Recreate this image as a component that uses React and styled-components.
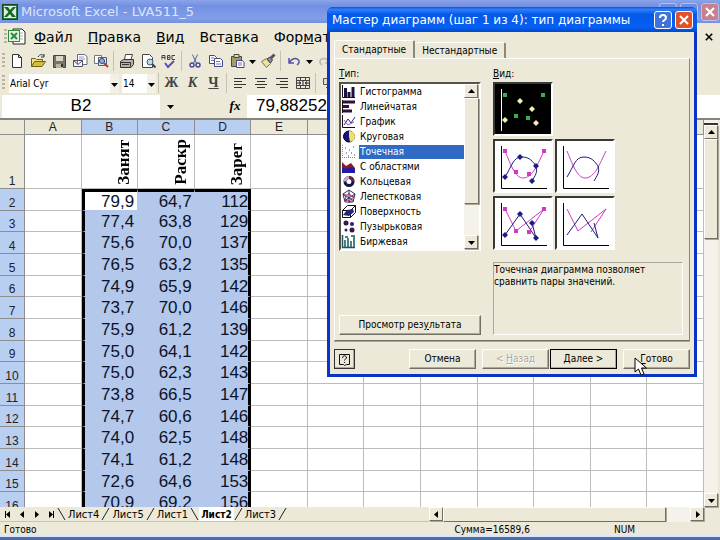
import React, { useState } from 'react';
import styled, { createGlobalStyle, css } from 'styled-components';

const GlobalStyle = createGlobalStyle`
  * { box-sizing: border-box; }
  body {
    margin: 0;
    overflow: hidden;
    background: #ece9d8;
    color: #000;
    font-family: "DejaVu Sans Condensed", "DejaVu Sans", sans-serif;
    font-size: 10px;
  }
  button, input, select { font-family: inherit; color: inherit; }
  button { padding: 0; cursor: default; }
`;

//DATA

const MENU = [['', 'Ф', 'айл'], ['', 'П', 'равка'], ['', 'В', 'ид'], ['Вст', 'а', 'вка'], ['Фор', 'м', 'ат']];

const COLUMNS = ['A', 'B', 'C', 'D', 'E', 'F', 'G', 'H', 'I', 'J', 'K', 'L'];

const ROWS = [
  ['79,9', '64,7', '112'],
  ['77,4', '63,8', '129'],
  ['75,6', '70,0', '137'],
  ['76,5', '63,2', '135'],
  ['74,9', '65,9', '142'],
  ['73,7', '70,0', '146'],
  ['75,9', '61,2', '139'],
  ['75,0', '64,1', '142'],
  ['75,0', '62,3', '143'],
  ['73,8', '66,5', '147'],
  ['74,7', '60,6', '146'],
  ['74,0', '62,5', '148'],
  ['74,1', '61,2', '148'],
  ['72,6', '64,6', '153'],
  ['70,9', '69,2', '156'],
];

const HEADINGS = { B: 'Занят', C: 'Раскр', D: 'Зарег' };

const SHEETS = ['Лист4', 'Лист5', 'Лист1', 'Лист2', 'Лист3'];

const raised = css`
  border: 1px solid;
  border-color: #fff #716f64 #716f64 #fff;
  box-shadow: 1px 1px 0 #aca899;
`;

//APPLICATION WINDOW

const Window = styled.div`
  display: flex;
  flex-direction: column;
  height: 100vh;
  overflow: hidden;
  border-bottom: 3px solid #4a6ea9;
`;

const TitleBar = styled.header`
  display: flex;
  flex: none;
  align-items: center;
  gap: 3px;
  height: 23px;
  padding: 0 1px 0 2px;
  background: linear-gradient(#8aa4ea, #7490e2 25%, #819ee8 80%, #7890dc);
`;

const WindowTitle = styled.h1`
  flex: 1;
  margin: 0;
  color: #dce6fb;
  font-family: "DejaVu Sans", sans-serif;
  font-size: 13px;
  font-weight: normal;
  white-space: nowrap;
`;

const CaptionButton = styled.button`
  display: flex;
  align-items: center;
  justify-content: center;
  width: 18px;
  height: 18px;
  border: 1px solid ${({ $faded }) => ($faded ? '#b4c2ef' : '#fff')};
  border-radius: 3px;
  background: ${({ $tone }) => $tone};
`;

const MenuBar = styled.nav`
  display: flex;
  flex: none;
  align-items: center;
  height: 27px;
  padding: 0 6px 0 2px;
`;

const MenuItem = styled.button`
  margin: 0 4px 0 5px;
  padding: 0 3px;
  border: 0;
  background: none;
  font-family: "DejaVu Sans", sans-serif;
  font-size: 14px;
  line-height: 22px;
`;

const Spacer = styled.div`
  flex: 1;
`;

const BookClose = styled.button`
  width: 10px;
  border: 0;
  background: none;
`;

const Grip = styled.span`
  width: 3px;
  height: 16px;
  margin: 0 1px 0 2px;
  background: repeating-linear-gradient(#b9b5a0 0 2px, transparent 2px 4px);
`;

const ToolBar = styled.div`
  display: flex;
  flex: none;
  align-items: center;
  height: 22px;
`;

const Tool = styled.button`
  display: flex;
  flex: none;
  align-items: center;
  justify-content: center;
  width: ${({ $narrow }) => ($narrow ? 10 : 21)}px;
  height: 20px;
  border: 0;
  background: none;
`;

const FormatTool = styled(Tool)`
  color: #444;
  font-family: "Liberation Serif", serif;
  font-size: 14px;
  font-weight: bold;
`;

const Divider = styled.span`
  width: 1px;
  height: 20px;
  margin: 0 2px;
  background: #c5c2b2;
`;

const Combo = styled.label`
  display: flex;
  position: relative;
  margin-left: 3px;
  svg { position: absolute; right: 1px; top: 7px; pointer-events: none; }
`;

const ComboBox = styled.select`
  width: ${({ $width }) => $width}px;
  height: 19px;
  padding: 0 0 0 1px;
  border: 0;
  appearance: none;
  background: #fff linear-gradient(#f3f1e6, #f3f1e6) right / 9px 100% no-repeat;
  font-size: 10px;
`;

const FormulaBar = styled.div`
  display: flex;
  flex: none;
  align-items: center;
  height: 24px;
  padding: 0 0 0 2px;
`;

const NameBox = styled.input`
  width: 158px;
  height: 23px;
  padding: 0;
  border: 0;
  background: #fff;
  font-family: "Liberation Sans", sans-serif;
  font-size: 17px;
  text-align: center;
`;

const FormulaField = styled.input`
  flex: 1;
  min-width: 0;
  height: 23px;
  padding: 0 9px;
  border: 0;
  background: #fff;
  font-family: "Liberation Sans", sans-serif;
  font-size: 17px;
`;

const FxButton = styled.button`
  width: 24px;
  margin-left: 42px;
  border: 0;
  background: none;
  font-family: "Liberation Serif", serif;
  font-size: 13px;
  font-style: italic;
  font-weight: bold;
`;

//SHEET

const Workbook = styled.main`
  display: flex;
  flex: 1;
  min-height: 0;
  padding-right: 2px;
  border-top: 2px solid #85837a;
`;

const SheetArea = styled.div`
  flex: 1;
  min-width: 0;
  overflow: hidden;
  background: #fff;
`;

const Sheet = styled.table`
  width: 100%;
  border-collapse: separate;
  border-spacing: 0;
  table-layout: fixed;
  font-family: "Liberation Sans", sans-serif;
`;

const ColumnHead = styled.th`
  width: ${({ $corner }) => ($corner ? '25px' : 'auto')};
  height: 15px;
  padding: 0;
  border-right: 1px solid #8e8e8e;
  border-bottom: 1px solid #8e8e8e;
  background: ${({ $selected }) => ($selected ? '#b9cff2' : '#ece9d8')};
  color: #222;
  font-size: 12px;
  font-weight: normal;
  line-height: 13px;
`;

const RowHead = styled.th`
  height: ${({ $height }) => $height}px;
  padding: 0;
  border-right: 1px solid #8e8e8e;
  border-bottom: 1px solid #8e8e8e;
  background: ${({ $selected }) => ($selected ? '#b9cff2' : '#ece9d8')};
  color: #222;
  font-size: 12px;
  font-weight: normal;
  line-height: 14px;
  vertical-align: bottom;
`;

const Cell = styled.td`
  padding: 0;
  border-right: 1px solid #bcbcbc;
  border-bottom: 1px solid #bcbcbc;
`;

const HeadingCell = styled(Cell)`
  padding: 0 5px 1px 0;
  text-align: right;
  vertical-align: bottom;
  span {
    display: inline-block;
    writing-mode: vertical-rl;
    transform: rotate(180deg);
    font-family: "Liberation Serif", serif;
    font-size: 17px;
    font-weight: bold;
    line-height: 17px;
  }
`;

const DataCell = styled(Cell)`
  padding-right: ${({ $edge }) => ($edge ? 0 : 2)}px;
  border-color: #b4c8ec;
  ${({ $edge }) => $edge === 'left' && 'border-left: 3px solid #000; padding-right: 3px;'}
  ${({ $edge }) => $edge === 'right' && 'border-right: 3px solid #000;'}
  ${({ $top }) => $top && 'border-top: 3px solid #000;'}
  background: ${({ $active }) => ($active ? '#fff' : '#b4c8ec')};
  color: #0c1228;
  font-size: 17px;
  line-height: 17px;
  text-align: right;
`;

const VerticalBar = styled.div`
  display: flex;
  flex: none;
  flex-direction: column;
  width: ${({ $width }) => $width}px;
  background: #f4f2ea;
`;

const ScrollButton = styled.button`
  display: flex;
  flex: none;
  align-items: center;
  justify-content: center;
  width: 14px;
  height: 14px;
  background: #ece9d8;
  ${raised}
`;

const Thumb = styled.div`
  flex: ${({ $part }) => $part};
  background: #ece9d8;
  ${raised}
`;

const Track = styled.div`
  flex: ${({ $part }) => $part};
`;

const SplitBox = styled.div`
  height: 5px;
  border-bottom: 2px solid #333;
`;

const BottomBar = styled.div`
  display: flex;
  flex: none;
  height: 15px;
  padding-right: 16px;
`;

const SheetTabs = styled.div`
  display: flex;
  flex: 1;
  align-items: center;
  padding-left: 1px;
  border-bottom: 1px solid #c8c4b2;
`;

const NavButton = styled.button`
  display: flex;
  justify-content: center;
  width: 14px;
  border: 0;
  background: none;
`;

const SheetTab = styled.button`
  height: 14px;
  padding: 0 2px;
  border: 0;
  background: ${({ $active }) => ($active ? '#fff' : 'none')};
  font-size: ${({ $active }) => ($active ? 10 : 11)}px;
  font-weight: ${({ $active }) => ($active ? 'bold' : 'normal')};
  line-height: 13px;
`;

const Slash = styled.svg`
  flex: none;
  width: 9px;
  height: 14px;
`;

const HorizontalBar = styled.div`
  display: flex;
  width: 39%;
  background: #f4f2ea;
`;

const StatusBar = styled.footer`
  display: flex;
  flex: none;
  height: 15px;
  padding: 0 85px 0 4px;
  background: linear-gradient(#ece9d8 60%, #dfe5f6);
  font-size: 10px;
  line-height: 16px;
`;

const Sum = styled.span`
  flex: 1;
  padding-right: 84px;
  text-align: right;
`;

//WIZARD

const Dialog = styled.section`
  position: absolute;
  top: 7px;
  right: 23px;
  width: 370px;
  padding: 0 3px 3px;
  border-radius: 6px 6px 0 0;
  background: #0a35c4;
`;

const DialogTitle = styled.header`
  display: flex;
  align-items: center;
  gap: 3px;
  height: 25px;
  margin: 0 -3px;
  padding: 0 4px 0 5px;
  border-radius: 6px 6px 0 0;
  background: linear-gradient(#0a4fd8, #2f80f8 10%, #0458e8 30%, #0560f4 80%, #0348cc);
`;

const WizardTitle = styled.h2`
  flex: 1;
  margin: 0;
  color: #fff;
  font-family: "DejaVu Sans", sans-serif;
  font-size: 12px;
  font-weight: normal;
  white-space: nowrap;
`;

const DialogBody = styled.div`
  padding: 8px 4px 5px;
  background: #ece9d8;
`;

const TabList = styled.div`
  display: flex;
  align-items: flex-end;
`;

const Tab = styled.button`
  height: ${({ $active }) => ($active ? 18 : 16)}px;
  padding: 0 7px;
  border: 1px solid #fff;
  border-right: 2px solid #8c897a;
  border-bottom: 0;
  border-left-width: ${({ $active }) => ($active ? 1 : 0)}px;
  border-radius: 2px 2px 0 0;
  background: #ece9d8;
  font-size: 10px;
`;

const Panel = styled.div`
  display: grid;
  grid-template-columns: 142px 1fr;
  gap: 0 12px;
  padding: 8px 3px 5px 4px;
  border: 1px solid;
  border-color: #fff #8c897a #716f64 #fff;
  box-shadow: 0 1px 0 #aca899;
`;

const Column = styled.div`
  display: flex;
  flex-direction: column;
`;

const Caption = styled.div`
  height: 15px;
  font-size: 10px;
  line-height: 14px;
`;

const ListFrame = styled.div`
  display: flex;
  height: 169px;
  border: 2px solid;
  border-color: #55534a #fff #fff #55534a;
  background: #fff;
`;

const TypeList = styled.ul`
  display: flex;
  flex: 1;
  flex-direction: column;
  margin: 0;
  padding: 0;
  list-style: none;
`;

const TypeItem = styled.li`
  display: flex;
  flex: 1;
`;

const TypeButton = styled.button`
  display: flex;
  flex: 1;
  gap: 3px;
  align-items: center;
  border: 0;
  background: none;
  font-size: 10px;
  line-height: 14px;
  text-align: left;
  span {
    flex: 1;
    padding-left: 1px;
    background: ${({ $active }) => ($active ? '#316ac5' : 'transparent')};
    color: ${({ $active }) => ($active ? '#fff' : '#000')};
  }
`;

const Views = styled.div`
  display: grid;
  grid-template-columns: 60px 60px;
  grid-auto-rows: 54px;
  gap: 3px 2px;
`;

const ViewButton = styled.button`
  display: flex;
  width: 60px;
  border: 2px solid;
  border-color: #3a3a34 #fff #fff #3a3a34;
  background: ${({ $active }) => ($active ? '#000' : '#fff')};
  &:first-child { grid-column: 1 / -1; }
`;

const Description = styled.p`
  flex: 1;
  margin: 12px 3px 0 0;
  padding: 1px 0 0;
  border: 1px solid;
  border-color: #aca899 #fff #fff #aca899;
  font-size: 10px;
  line-height: 12px;
`;

const PushButton = styled.button`
  width: 67px;
  height: 20px;
  border: 1px solid;
  border-color: #fff #716f64 #716f64 #fff;
  box-shadow: inset -1px -1px 0 #aca899;
  background: #ece9d8;
  color: ${({ disabled }) => (disabled ? '#aca899' : '#000')};
  text-shadow: ${({ disabled }) => (disabled ? '1px 1px 0 #fff' : 'none')};
  font-size: 10px;
  line-height: 16px;
  ${({ $primary }) => $primary && 'border-color: #000;'}
`;

const PreviewButton = styled(PushButton)`
  width: 100%;
  margin-top: 64px;
`;

const Footer = styled.div`
  display: flex;
  gap: 6px;
  margin-top: 8px;
`;

const HelpButton = styled(PushButton)`
  display: flex;
  align-items: center;
  justify-content: center;
  width: 21px;
  border-color: #333;
`;

const Steps = styled.div`
  display: flex;
  gap: 1px;
`;

const Pointer = styled.svg`
  position: absolute;
  right: 49px;
  bottom: 0;
  width: 14px;
  height: 20px;
  pointer-events: none;
`;

//DRAWINGS

const Arrow = ({ dir = 'down', bar }) => {
  const points = {
    down: '0,2 7,2 3.5,6',
    up: '0,5 7,5 3.5,1',
    left: '5,0 5,7 1,3.5',
    right: '2,0 2,7 6,3.5',
  };
  return (
    <svg width="7" height="7" aria-hidden="true">
      <polygon points={points[dir]} fill="#000" />
      {bar && <path d={dir === 'left' ? 'M0.5 0v7' : 'M6.500 0v7'} stroke="#000" />}
    </svg>
  );
};

const Cross = ({ color = '#fff', size = 10, width = 2 }) => (
  <svg width={size} height={size} viewBox="0 0 10 10" aria-hidden="true">
    <path d="M1 1L9 9M9 1L1 9" stroke={color} strokeWidth={width} fill="none" />
  </svg>
);

const ExcelLogo = () => (
  <svg width="16" height="16" viewBox="0 0 16 16" aria-hidden="true">
    <rect x="0.5" y="0.5" width="15" height="15" fill="#2d7d3a" stroke="#0d4a1c" />
    <rect x="2" y="2" width="12" height="12" fill="#d9eedb" />
    <path d="M2 3h4l2 3 3-3h3L9.500 8 14 13h-4L8 10l-3 3H2l4.500-5z" fill="#146628" />
  </svg>
);

const BookIcon = () => (
  <svg width="18" height="18" viewBox="0 0 18 18" aria-hidden="true">
    <path d="M5 1h9l3 3v12H5z" fill="#fff" stroke="#222" />
    <path d="M12 5h3M12 8h3M12 11h3" stroke="#9ab89e" />
    <rect x="0.5" y="2.500" width="11" height="11" fill="#e1f3e0" stroke="#2f8a3d" />
    <path d="M3 5l6 6M9 5l-6 6" stroke="#2f8a3d" strokeWidth="2" />
  </svg>
);

const toolShapes = {
  new: <path d="M3.500 1.500h6l3 3v10h-9zM9.500 1.500v3h3" fill="#fff" stroke="#333" />,
  open: (
    <>
      <path d="M1.500 13.500v-8h4l1 1h6v2" fill="#f5e08a" stroke="#6b6417" />
      <path d="M1.500 13.500l3-5h11l-3.500 5z" fill="#d6bd3c" stroke="#6b6417" />
      <path d="M8 4c2-3 4-3 6-1M14 1v3h-3" fill="none" stroke="#333" />
    </>
  ),
  save: (
    <>
      <path d="M2.500 2.500h12v12h-12z" fill="#75756a" stroke="#444438" />
      <path d="M5 3h7v5H5z" fill="#d9d7c4" />
      <path d="M5 11h7v4H5z" fill="#b9b79a" />
      <path d="M10 11h2v3h-2z" fill="#333" />
    </>
  ),
  mail: (
    <>
      <path d="M5.500 1.500h7l2.500 2v8H5.500z" fill="#fff" stroke="#6a6a86" />
      <path d="M7 4h5M7 6h6" stroke="#9a9ab0" />
      <path d="M1.500 7.500h9v6h-9zM1.500 7.500l4.500 4 4.500-4" fill="#f4f4fb" stroke="#555570" />
    </>
  ),
  search: (
    <>
      <path d="M1.500 2.500h7v8h-7z" fill="#fff" stroke="#777" />
      <path d="M5.500 4.500h8v8h-8z" fill="#dbe8f8" stroke="#4b5a8a" />
      <circle cx="9" cy="8" r="2.500" fill="#8fb7e0" stroke="#333a66" />
      <path d="M11 10l4 4" stroke="#a4442c" strokeWidth="2" />
    </>
  ),
  print: (
    <>
      <path d="M5.500 6.500l1-5h7l-1.500 5" fill="#fff" stroke="#444" />
      <path d="M1.500 8.500l3-2h10v5l-2.500 3H1.500z" fill="#b5b3a5" stroke="#333" />
      <path d="M1.500 9.500h10v4M3 11.500h7" fill="none" stroke="#333" />
    </>
  ),
  preview: (
    <>
      <path d="M2.500 1.500h7l3 3v10h-10z" fill="#fff" stroke="#444" />
      <circle cx="10" cy="9" r="3" fill="#b8dce8" stroke="#3c5e70" />
      <path d="M12 11l3.500 3.500" stroke="#345" strokeWidth="2" />
    </>
  ),
  spell: (
    <>
      <path d="M1 6.500v-4h3v4M1 4.500h3M6.500 2.500h2.500v4H6.500zM6.500 4.500h2M14 2.500h-3v4h3" fill="none" stroke="#444" />
      <path d="M4 10l3 4 6-6" fill="none" stroke="#5b4db0" strokeWidth="2" />
    </>
  ),
  cut: (
    <>
      <path d="M5.500 1.500l4 9M10.500 1.500l-4 9" stroke="#555f9a" fill="none" />
      <circle cx="5" cy="12" r="2" fill="none" stroke="#4c47a5" strokeWidth="1.500" />
      <circle cx="11" cy="12" r="2" fill="none" stroke="#4c47a5" strokeWidth="1.500" />
    </>
  ),
  copy: (
    <>
      <path d="M1.500 2.500h5l2 2v6h-7z" fill="#fff" stroke="#444a80" />
      <path d="M6.500 5.500h6l2 2v6h-8z" fill="#fff" stroke="#444a80" />
      <path d="M3 5h3M3 7.500h3M8 8.500h4M8 11h5" stroke="#6e78b8" />
    </>
  ),
  paste: (
    <>
      <path d="M2.500 3.500h10v10h-10z" fill="#a59b68" stroke="#4c4a3c" />
      <path d="M5 1.500h5v3H5z" fill="#d9d6c6" stroke="#4c4a3c" />
      <path d="M7.500 7.500h6l1.500 2v5H7.500z" fill="#fff" stroke="#444a80" />
      <path d="M9 10h4M9 12h4" stroke="#6e78b8" />
    </>
  ),
  brush: (
    <>
      <path d="M1.500 8.500l5-3 4 5-4 4z" fill="#efe29c" stroke="#77734f" />
      <path d="M7 6l3-2 2.500 3-2 3z" fill="#8888a8" stroke="#444" />
      <path d="M11 5l3.500-3.500" stroke="#555" strokeWidth="3" />
    </>
  ),
  undo: <path d="M3 5v5h5M3.500 9.500c2-4 6-5 8.500-3 2 2 1 4-1 5.500" fill="none" stroke="#5550a8" strokeWidth="1.500" />,
  redo: <path d="M13 5v5H8M12.500 9.500c-2-4-6-5-8.500-3-2 2-1 4 1 5.500" fill="none" stroke="#b8b5ad" strokeWidth="1.500" />,
  left: <path d="M2 3.500h12M2 6.500h8M2 9.500h12M2 12.500h8" stroke="#333" />,
  center: <path d="M2 3.500h12M4 6.500h8M2 9.500h12M4 12.500h8" stroke="#333" />,
  right: <path d="M2 3.500h12M6 6.500h8M2 9.500h12M6 12.500h8" stroke="#333" />,
  merge: (
    <>
      <path d="M1.500 2.500h13v11h-13zM1.500 5.500h13M1.500 10.500h13M5.500 2.500v3M10.500 2.500v3M5.500 10.500v3M10.500 10.500v3" fill="none" stroke="#444" />
      <path d="M2 8h3M14 8h-3M4 6.500l2 1.500-2 1.500M12 6.500L10 8l2 1.500M8 6v4" fill="none" stroke="#222" />
    </>
  ),
  money: <path d="M2.500 3.500h11v6h-11zM5 12.500h8" fill="#dedbd0" stroke="#555" />,
};

const ToolIcon = ({ name }) => (
  <svg width="16" height="16" viewBox="0 0 16 16" aria-hidden="true">{toolShapes[name]}</svg>
);

const TYPES = [
  ['Гистограмма', (
    <>
      <path d="M1.500 1v12.500H14" stroke="#111" fill="none" />
      <path d="M4.500 4v9M8 8v5M12 3v10" stroke="#1b1240" strokeWidth="3" fill="none" />
    </>
  )],
  ['Линейчатая', (
    <>
      <path d="M1.500 1v13" stroke="#111" />
      <path d="M2 3h12M2 7.500h6M2 12h9" stroke="#30103c" strokeWidth="3" fill="none" />
    </>
  )],
  ['График', (
    <>
      <path d="M1.500 1v12.500H14" stroke="#111" fill="none" />
      <path d="M3 11l4-6 3 4 4-6" stroke="#24249a" fill="none" />
      <path d="M3 6l4 5 6-3" stroke="#b050a0" fill="none" />
    </>
  )],
  ['Круговая', (
    <>
      <circle cx="8" cy="7.500" r="5.500" fill="#14147a" stroke="#000" />
      <path d="M8 7.500V2a5.500 5.500 0 0 1 1 11z" fill="#efe06c" />
    </>
  )],
  ['Точечная', (
    <>
      <path d="M1.500 1v12.500H14" stroke="#888" fill="none" strokeDasharray="1 1" />
      <path d="M4 4h1M8 6h1M12 3h1M5 9h1M10 9h1M7 12h1M13 11h1" stroke="#444466" />
    </>
  )],
  ['С областями', (
    <>
      <path d="M1 14V3l4 4 5-3 4 5v5z" fill="#8e1533" />
      <path d="M1 14V8l4 2 5-2 4 2v4z" fill="#1c1ca8" />
    </>
  )],
  ['Кольцевая', (
    <>
      <circle cx="8" cy="7.500" r="4" fill="none" stroke="#15154c" strokeWidth="3" />
      <path d="M8 3.500a4 4 0 0 0-4 4" stroke="#c8a8c8" strokeWidth="3" fill="none" />
      <path d="M8 3.500a4 4 0 0 1 4 4" stroke="#702040" strokeWidth="3" fill="none" />
    </>
  )],
  ['Лепестковая', (
    <>
      <path d="M8 1l6 4-2 8H4L2 5zM8 1v13M2 5l11 7M14 5L3 12" fill="none" stroke="#38285c" />
      <path d="M8 4l2 3 3 1-3 2v3l-3-2-3 1 1-4-2-2 4 0z" fill="none" stroke="#a03060" />
    </>
  )],
  ['Поверхность', (
    <>
      <path d="M1.500 6.500l5-5h8v7l-5 5h-8zM1.500 6.500h8v7M9.500 6.500l5-5" fill="none" stroke="#111" />
      <path d="M2 11l4-5 6-1 1 3-5 4z" fill="#24247c" />
    </>
  )],
  ['Пузырьковая', (
    <>
      <circle cx="5" cy="4" r="2.500" fill="#401440" />
      <circle cx="11" cy="5" r="2" fill="#24246c" />
      <circle cx="5" cy="11" r="1.500" fill="#24246c" />
      <circle cx="11" cy="11" r="2.500" fill="#401440" />
    </>
  )],
  ['Биржевая', <path d="M1.500 1v12.500H14M4 6v7M7 4v9M10 7v6M13 3v10M4 3h3M10 2h4" stroke="#16585c" strokeWidth="1.500" fill="none" />],
];

const BLUE = '#1c1c80';
const PINK = '#cc3cc4';

const Axes = () => <path d="M6.500 5v42.500H52" stroke="#000" fill="none" />;

const Marks = ({ points, color }) => points.map(([x, y]) => (
  <rect key={`${x}-${y}`} x={x - 2} y={y - 2} width="4" height="4" fill={color} />
));

const Diamonds = ({ points, color }) => points.map(([x, y]) => (
  <path key={`${x}-${y}`} d={`M${x} ${y - 3}l3 3-3 3-3-3z`} fill={color} />
));

const ViewArt = ({ kind, marks }) => (
  <svg width="56" height="50" viewBox="0 0 56 50" aria-hidden="true">
    {kind === 'dots' && (
      <>
        <path d="M6.500 5v42" stroke="#fff" />
        <Marks points={[[10, 11], [48, 11], [21, 32], [33, 34]]} color="#35b050" />
        <Diamonds points={[[25, 17], [37, 25], [10, 36], [41, 39]]} color="#f4eeb0" />
      </>
    )}
    {kind === 'smooth' && (
      <>
        <Axes />
        <path d="M10 10C15 22 20 37 28 37C38 37 43 22 49 10" stroke={PINK} fill="none" />
        <path d="M10 36C17 25 18 16 27 16C35 16 38 21 41 25C43 31 40 35 37 40" stroke={BLUE} fill="none" />
        {marks && <Marks points={[[10, 10], [21, 31], [34, 33], [49, 10]]} color={PINK} />}
        {marks && <Diamonds points={[[10, 36], [25, 16], [41, 25], [37, 40]]} color={BLUE} />}
      </>
    )}
    {kind === 'lines' && (
      <>
        <Axes />
        <path d="M10 11L21 33L49 11L34 34" stroke={PINK} fill="none" />
        <path d="M10 37L25 16L41 40L37 25" stroke={BLUE} fill="none" />
        {marks && <Marks points={[[10, 11], [21, 33], [34, 34], [49, 11]]} color={PINK} />}
        {marks && <Diamonds points={[[10, 37], [25, 16], [41, 40], [37, 25]]} color={BLUE} />}
      </>
    )}
  </svg>
);

const TabEdge = ({ back }) => (
  <Slash viewBox="0 0 9 14" aria-hidden="true">
    <path d={back ? 'M1 1L8 13' : 'M8 1L1 13'} stroke="#222" fill="none" />
  </Slash>
);

const edgeOf = (i) => {
  if (i === 0) return 'left';
  return i === 2 ? 'right' : undefined;
};

//COMPONENTS

const Tools = () => (
  <>
    <ToolBar>
      <Grip />
      <Tool aria-label="Создать"><ToolIcon name="new" /></Tool>
      <Tool aria-label="Открыть"><ToolIcon name="open" /></Tool>
      <Tool aria-label="Сохранить"><ToolIcon name="save" /></Tool>
      <Tool aria-label="Сообщение"><ToolIcon name="mail" /></Tool>
      <Tool aria-label="Поиск"><ToolIcon name="search" /></Tool>
      <Divider />
      <Tool aria-label="Печать"><ToolIcon name="print" /></Tool>
      <Tool aria-label="Просмотр"><ToolIcon name="preview" /></Tool>
      <Tool aria-label="Орфография"><ToolIcon name="spell" /></Tool>
      <Divider />
      <Tool aria-label="Вырезать"><ToolIcon name="cut" /></Tool>
      <Tool aria-label="Копировать"><ToolIcon name="copy" /></Tool>
      <Tool aria-label="Вставить"><ToolIcon name="paste" /></Tool>
      <Tool $narrow aria-label="Варианты вставки"><Arrow /></Tool>
      <Tool aria-label="Формат по образцу"><ToolIcon name="brush" /></Tool>
      <Divider />
      <Tool aria-label="Отменить"><ToolIcon name="undo" /></Tool>
      <Tool $narrow aria-label="Список отмены"><Arrow /></Tool>
      <Tool aria-label="Вернуть"><ToolIcon name="redo" /></Tool>
    </ToolBar>
    <ToolBar>
      <Grip />
      <Combo>
        <ComboBox $width={110} aria-label="Шрифт"><option>Arial Cyr</option></ComboBox>
        <Arrow />
      </Combo>
      <Combo>
        <ComboBox $width={34} aria-label="Размер"><option>14</option></ComboBox>
        <Arrow />
      </Combo>
      <Divider />
      <FormatTool aria-label="Полужирный">Ж</FormatTool>
      <FormatTool aria-label="Курсив"><i>К</i></FormatTool>
      <FormatTool aria-label="Подчеркнутый"><u>Ч</u></FormatTool>
      <Divider />
      <Tool aria-label="По левому краю"><ToolIcon name="left" /></Tool>
      <Tool aria-label="По центру"><ToolIcon name="center" /></Tool>
      <Tool aria-label="По правому краю"><ToolIcon name="right" /></Tool>
      <Tool aria-label="Объединить"><ToolIcon name="merge" /></Tool>
      <Divider />
      <Tool aria-label="Денежный формат"><ToolIcon name="money" /></Tool>
    </ToolBar>
  </>
);

const Grid = () => (
  <SheetArea>
    <Sheet>
      <thead>
        <tr>
          <ColumnHead $corner />
          {COLUMNS.map((c) => <ColumnHead key={c} $selected={c in HEADINGS}>{c}</ColumnHead>)}
        </tr>
      </thead>
      <tbody>
        <tr>
          <RowHead $height={54}>1</RowHead>
          {COLUMNS.map((c) => (c in HEADINGS
            ? <HeadingCell key={c}><span>{HEADINGS[c]}</span></HeadingCell>
            : <Cell key={c} />))}
        </tr>
        {ROWS.map((row, r) => (
          <tr key={r}>
            <RowHead $selected $height={r % 3 === 1 ? 21 : 22}>{r + 2}</RowHead>
            <Cell />
            {row.map((value, i) => (
              <DataCell key={i} $edge={edgeOf(i)} $top={r === 0} $active={r === 0 && i === 0}>{value}</DataCell>
            ))}
            {COLUMNS.slice(4).map((c) => <Cell key={c} />)}
          </tr>
        ))}
      </tbody>
    </Sheet>
  </SheetArea>
);

const Wizard = () => {
  const [type, setType] = useState('Точечная');

  return (
    <Dialog role="dialog" aria-labelledby="wizard-title">
      <DialogTitle>
        <WizardTitle id="wizard-title">Мастер диаграмм (шаг 1 из 4): тип диаграммы</WizardTitle>
        <CaptionButton $tone="#3f73dc" aria-label="Справка">
          <svg width="10" height="12" viewBox="0 0 10 12" aria-hidden="true">
            <path d="M2 4c0-4 6-4 6 0 0 2-3 2-3 4M5 10v2" stroke="#fff" strokeWidth="2" fill="none" />
          </svg>
        </CaptionButton>
        <CaptionButton $tone="#e0512c" aria-label="Закрыть"><Cross /></CaptionButton>
      </DialogTitle>
      <DialogBody>
        <TabList role="tablist">
          <Tab role="tab" $active>Стандартные</Tab>
          <Tab role="tab">Нестандартные</Tab>
        </TabList>
        <Panel>
          <Column>
            <Caption><u>Т</u>ип:</Caption>
            <ListFrame>
              <TypeList>
                {TYPES.map(([name, art]) => (
                  <TypeItem key={name}>
                    <TypeButton $active={name === type} onClick={() => setType(name)}>
                      <svg width="15" height="15" viewBox="0 0 15 15" aria-hidden="true">{art}</svg>
                      <span>{name}</span>
                    </TypeButton>
                  </TypeItem>
                ))}
              </TypeList>
              <VerticalBar $width={15}>
                <ScrollButton aria-label="Вверх"><Arrow dir="up" /></ScrollButton>
                <Thumb $part={10} />
                <Track $part={3} />
                <ScrollButton aria-label="Вниз"><Arrow /></ScrollButton>
              </VerticalBar>
            </ListFrame>
            <PreviewButton>Просмотр рез<u>у</u>льтата</PreviewButton>
          </Column>
          <Column>
            <Caption><u>В</u>ид:</Caption>
            <Views>
              <ViewButton $active aria-label="Точки"><ViewArt kind="dots" /></ViewButton>
              <ViewButton aria-label="Сглаженные с маркерами"><ViewArt kind="smooth" marks /></ViewButton>
              <ViewButton aria-label="Сглаженные"><ViewArt kind="smooth" /></ViewButton>
              <ViewButton aria-label="Отрезки с маркерами"><ViewArt kind="lines" marks /></ViewButton>
              <ViewButton aria-label="Отрезки"><ViewArt kind="lines" /></ViewButton>
            </Views>
            <Description>Точечная диаграмма позволяет<br />сравнить пары значений.</Description>
          </Column>
        </Panel>
        <Footer>
          <HelpButton aria-label="Помощник">
            <svg width="13" height="13" viewBox="0 0 13 13" aria-hidden="true">
              <path d="M1.500 1.500h10v10h-3l-2 1-1-1h-4z" fill="none" stroke="#111" />
              <path d="M4.500 5c0-3 4-3 4 0 0 1-2 1-2 2.500M6.500 9v1" fill="none" stroke="#111" />
            </svg>
          </HelpButton>
          <Spacer />
          <PushButton>Отмена</PushButton>
          <Steps>
            <PushButton disabled>&lt; <u>Н</u>азад</PushButton>
            <PushButton $primary><u>Д</u>алее &gt;</PushButton>
          </Steps>
          <PushButton><u>Г</u>отово</PushButton>
        </Footer>
      </DialogBody>
      <Pointer viewBox="0 0 14 20" aria-hidden="true">
        <path d="M1 1v14l3.500-3 2.500 6 3-1-2.500-6h5z" fill="#fff" stroke="#000" />
      </Pointer>
    </Dialog>
  );
};

const App = () => (
  <>
    <GlobalStyle />
    <Window>
      <TitleBar>
        <ExcelLogo />
        <WindowTitle>Microsoft Excel - LVA511_5</WindowTitle>
        <CaptionButton $faded $tone="#6e8be2" aria-label="Свернуть" />
        <CaptionButton $faded $tone="#6e8be2" aria-label="Развернуть" />
        <CaptionButton $faded $tone="#c9808e" aria-label="Закрыть"><Cross /></CaptionButton>
      </TitleBar>
      <MenuBar>
        <Grip />
        <BookIcon />
        {MENU.map(([before, key, after]) => (
          <MenuItem key={before + key}>{before}<u>{key}</u>{after}</MenuItem>
        ))}
        <Spacer />
        <BookClose aria-label="Закрыть книгу"><Cross color="#000" size={8} /></BookClose>
      </MenuBar>
      <Tools />
      <FormulaBar>
        <NameBox aria-label="Имя" defaultValue="B2" />
        <Tool aria-label="Список имен"><Arrow /></Tool>
        <FxButton>fx</FxButton>
        <FormulaField aria-label="Формула" defaultValue="79,88252" />
      </FormulaBar>
      <Workbook>
        <Grid />
        <VerticalBar $width={14}>
          <SplitBox />
          <ScrollButton aria-label="Вверх"><Arrow dir="up" /></ScrollButton>
          <Thumb $part={10} />
          <Track $part={26} />
          <ScrollButton aria-label="Вниз"><Arrow /></ScrollButton>
        </VerticalBar>
      </Workbook>
      <BottomBar>
        <SheetTabs>
          <NavButton aria-label="Первый лист"><Arrow dir="left" bar /></NavButton>
          <NavButton aria-label="Предыдущий лист"><Arrow dir="left" /></NavButton>
          <NavButton aria-label="Следующий лист"><Arrow dir="right" /></NavButton>
          <NavButton aria-label="Последний лист"><Arrow dir="right" bar /></NavButton>
          <TabEdge back />
          {SHEETS.map((name) => (
            <React.Fragment key={name}>
              <SheetTab $active={name === 'Лист2'}>{name}</SheetTab>
              <TabEdge back={name === 'Лист1'} />
            </React.Fragment>
          ))}
        </SheetTabs>
        <HorizontalBar>
          <ScrollButton aria-label="Влево"><Arrow dir="left" /></ScrollButton>
          <Thumb $part={9} />
          <Track $part={1} />
          <ScrollButton aria-label="Вправо"><Arrow dir="right" /></ScrollButton>
        </HorizontalBar>
      </BottomBar>
      <StatusBar>
        <span>Готово</span>
        <Sum>Сумма=16589,6</Sum>
        <span>NUM</span>
      </StatusBar>
    </Window>
    <Wizard />
  </>
);

export default App;
